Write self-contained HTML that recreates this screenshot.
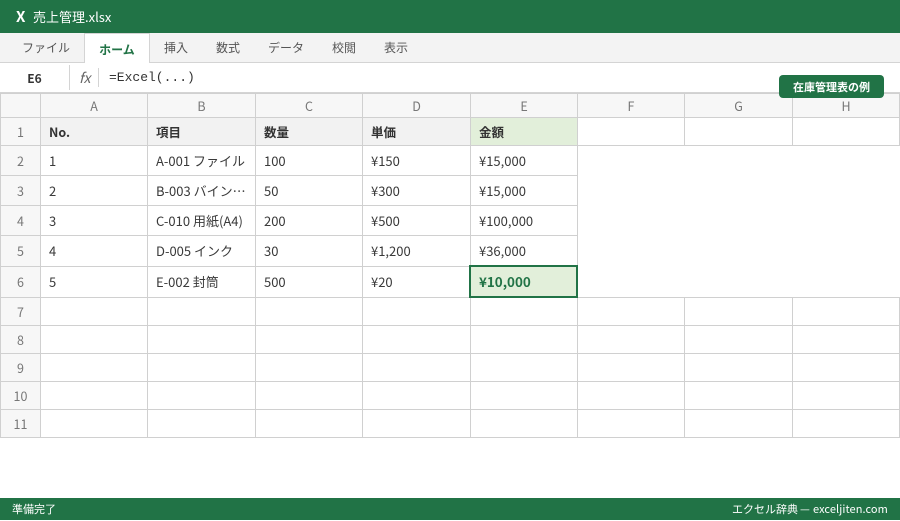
<!DOCTYPE html>
<html lang="ja"><head><meta charset="utf-8">
<style>
*{box-sizing:border-box}
html,body{margin:0;padding:0;background:#fff}
body{width:900px;height:520px;position:relative;overflow:hidden;font-family:"Noto Sans CJK JP","Liberation Sans",sans-serif;color:#333}
.abs{position:absolute}
.title{left:0;top:0;width:900px;height:33px;background:#217346;color:#fff}
.tabs{left:0;top:33px;width:900px;height:30px;background:#f3f3f3;border-bottom:1px solid #d4d4d4;font-size:12px;color:#555}
.tab{position:absolute;top:0;height:30px;line-height:30px;white-space:nowrap}
.home{left:84px;top:0;width:66px;height:30px;background:#fff;border:1px solid #d4d4d4;border-bottom:0;color:#217346;font-weight:700;text-align:center;line-height:31px;position:absolute}
.fbar{left:0;top:63px;width:900px;height:30px;background:#fff;border-bottom:1px solid #d4d4d4}
table{position:absolute;left:0;top:93px;width:900px;border-collapse:collapse;table-layout:fixed;font-size:13px}
td{border:1px solid #d0d0d0;padding:0 8px;white-space:nowrap;overflow:hidden;color:#3a3a3a}
td.h{background:#f7f7f7;color:#777;text-align:center;padding:0;font-size:12.5px}
td.b{background:#f2f2f2;font-weight:700;font-size:12.5px;padding-bottom:1px;color:#333}
td.g{background:#e2efda;font-weight:700;font-size:12.5px;padding-bottom:1px;color:#333}
td.n{border:0;border-left:1px solid #d0d0d0;background:#fff}
tr.u td{padding-bottom:2px}
.sel{left:469px;top:265px;width:109px;height:33px;border:2px solid #217346;background:#e2efda;color:#217346;font-weight:700;font-size:13.4px;line-height:29px;padding-left:8px}
.badge{left:779px;top:75px;width:105px;height:23px;background:#217346;color:#fff;border-radius:4px;font-size:11px;font-weight:700;text-align:center;line-height:24px}
.status{left:0;top:498px;width:900px;height:22px;background:#217346;color:#fff;font-size:11px;line-height:23px}
</style></head><body>
<div class="abs title">
<span class="abs" style="left:16px;top:6px;font-size:15px;font-weight:700;line-height:22px">X</span>
<span class="abs" style="left:33px;top:6px;font-size:13px;line-height:22px;white-space:nowrap">売上管理.xlsx</span>
</div>
<div class="abs tabs">
<span class="tab" style="left:22px">ファイル</span>
<span class="home">ホーム</span>
<span class="tab" style="left:164px">挿入</span>
<span class="tab" style="left:216px">数式</span>
<span class="tab" style="left:268px">データ</span>
<span class="tab" style="left:332px">校閲</span>
<span class="tab" style="left:384px">表示</span>
</div>
<div class="abs fbar">
<span class="abs" style="left:0;top:2px;width:70px;height:25px;border-right:1px solid #d4d4d4;text-align:center;font-weight:700;font-size:12px;line-height:27px;color:#333">E6</span>
<span class="abs" style="left:79px;top:4px;font-family:'Noto Sans CJK JP',sans-serif;font-style:italic;font-size:14px;line-height:22px;color:#666">fx</span>
<span class="abs" style="left:98px;top:5px;width:1px;height:19px;background:#d4d4d4"></span>
<span class="abs" style="left:109px;top:3px;font:13px/23px 'Liberation Mono',monospace;color:#333">=Excel(...)</span>
</div>
<table>
<colgroup><col style="width:40px"><col style="width:107px"><col style="width:108px"><col style="width:107px"><col style="width:108px"><col style="width:107px"><col style="width:107px"><col style="width:108px"><col style="width:107px"></colgroup>
<tr style="height:24px"><td class="h"></td><td class="h">A</td><td class="h">B</td><td class="h">C</td><td class="h">D</td><td class="h">E</td><td class="h">F</td><td class="h">G</td><td class="h">H</td></tr>
<tr style="height:28px"><td class="h">1</td><td class="b">No.</td><td class="b">項目</td><td class="b">数量</td><td class="b">単価</td><td class="g">金額</td><td></td><td></td><td></td></tr>
<tr style="height:30px"><td class="h">2</td><td>1</td><td>A-001 ファイル</td><td>100</td><td>¥150</td><td>¥15,000</td><td class="n" colspan="3"></td></tr>
<tr style="height:30px"><td class="h">3</td><td>2</td><td>B-003 バイン…</td><td>50</td><td>¥300</td><td>¥15,000</td><td class="n" colspan="3"></td></tr>
<tr style="height:30px"><td class="h">4</td><td>3</td><td>C-010 用紙(A4)</td><td>200</td><td>¥500</td><td>¥100,000</td><td class="n" colspan="3"></td></tr>
<tr class="u" style="height:31px"><td class="h">5</td><td>4</td><td>D-005 インク</td><td>30</td><td>¥1,200</td><td>¥36,000</td><td class="n" colspan="3"></td></tr>
<tr class="u" style="height:31px"><td class="h">6</td><td>5</td><td>E-002 封筒</td><td>500</td><td>¥20</td><td></td><td class="n" colspan="3"></td></tr>
<tr style="height:28px;border-top:1px solid #d0d0d0"><td class="h">7</td><td></td><td></td><td></td><td></td><td></td><td></td><td></td><td></td></tr>
<tr style="height:28px"><td class="h">8</td><td></td><td></td><td></td><td></td><td></td><td></td><td></td><td></td></tr>
<tr style="height:28px"><td class="h">9</td><td></td><td></td><td></td><td></td><td></td><td></td><td></td><td></td></tr>
<tr style="height:28px"><td class="h">10</td><td></td><td></td><td></td><td></td><td></td><td></td><td></td><td></td></tr>
<tr style="height:28px"><td class="h">11</td><td></td><td></td><td></td><td></td><td></td><td></td><td></td><td></td></tr>
</table>
<div class="abs sel">¥10,000</div>
<div class="abs badge">在庫管理表の例</div>
<div class="abs status">
<span class="abs" style="left:12px;top:0">準備完了</span>
<span class="abs" style="left:732px;top:0;white-space:nowrap">エクセル辞典</span>
<span class="abs" style="left:800px;top:0;white-space:nowrap">—</span>
<span class="abs" style="left:813px;top:0;white-space:nowrap;letter-spacing:.07px">exceljiten.com</span>
</div>
</body></html>
